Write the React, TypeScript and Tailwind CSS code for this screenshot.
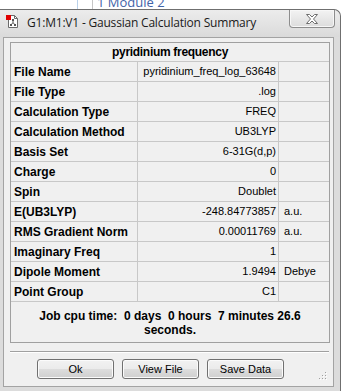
import React from "react";

interface SummaryRow {
  label: string;
  value: string;
  unit: string;
}

const rows: SummaryRow[] = [
  { label: "File Name", value: "pyridinium_freq_log_63648", unit: "" },
  { label: "File Type", value: ".log", unit: "" },
  { label: "Calculation Type", value: "FREQ", unit: "" },
  { label: "Calculation Method", value: "UB3LYP", unit: "" },
  { label: "Basis Set", value: "6-31G(d,p)", unit: "" },
  { label: "Charge", value: "0", unit: "" },
  { label: "Spin", value: "Doublet", unit: "" },
  { label: "E(UB3LYP)", value: "-248.84773857", unit: "a.u." },
  { label: "RMS Gradient Norm", value: "0.00011769", unit: "a.u." },
  { label: "Imaginary Freq", value: "1", unit: "" },
  { label: "Dipole Moment", value: "1.9494", unit: "Debye" },
  { label: "Point Group", value: "C1", unit: "" },
];

function AppIcon() {
  return (
    <svg width="12" height="13" viewBox="0 0 12 13" className="shrink-0">
      <path d="M2.5 0.5H8.5L11.5 3.5V12.5H2.5Z" fill="#fff" stroke="#6b6b6b" />
      <path d="M8.5 0.5V3.5H11.5" fill="none" stroke="#6b6b6b" />
      {/* tiny molecule */}
      <path d="M7 5V7.5M7 7.5L5 10M7 7.5L9 10" stroke="#555" strokeWidth="1" />
      <rect x="6" y="4" width="2" height="2" fill="#555" />
      <rect x="4" y="9" width="2" height="2" fill="#555" />
      <rect x="8" y="9" width="2" height="2" fill="#555" />
      <rect x="0" y="0" width="5" height="5" fill="#e00000" />
    </svg>
  );
}

function CloseGlyph() {
  return (
    <svg width="14" height="10" viewBox="0 0 14 10">
      <path
        d="M1.5 0.5H4.5L7 3L9.5 0.5H12.5L8.5 5L12.5 9.5H9.5L7 7L4.5 9.5H1.5L5.5 5Z"
        fill="#fff"
        stroke="#6e6e6e"
        strokeWidth="1"
        strokeLinejoin="round"
      />
    </svg>
  );
}

function Grip() {
  return (
    <svg width="10" height="10" viewBox="0 0 10 10">
      {[
        [7, 1],
        [4, 4],
        [7, 4],
        [1, 7],
        [4, 7],
        [7, 7],
      ].map(([x, y]) => (
        <g key={`${x}-${y}`}>
          <rect x={x + 1} y={y + 1} width="1" height="1" fill="#fff" />
          <rect x={x} y={y} width="1" height="1" fill="#a0a0a0" />
        </g>
      ))}
    </svg>
  );
}

function WinButton({ label }: { label: string }) {
  return (
    <button
      className="w-[77px] h-[20px] rounded-[3px] border border-[#707070] text-[11px] leading-none text-black
        bg-[linear-gradient(to_bottom,#f2f2f2_0%,#ebebeb_50%,#dddddd_51%,#cfcfcf_100%)]
        shadow-[inset_0_0_0_1px_#fbfbfb]"
    >
      {label}
    </button>
  );
}

export default function App() {
  return (
    <div className="w-[341px] h-[391px] bg-white overflow-hidden font-['Liberation_Sans',Arial,sans-serif]">
      {/* strip of the main window behind the dialog */}
      <div className="h-[9px] flex overflow-hidden">
        <div className="w-[77px]" />
        <div className="w-[1px] bg-[#b9d1ea]" />
        <div className="w-[14px]" />
        <div className="w-[1px] bg-[#c6c6c6]" />
        <div className="pl-[4px] -mt-[4px] text-[13px] leading-none text-[#3f63a8] font-['Open_Sans',sans-serif]">
          1 Module 2
        </div>
      </div>

      {/* dialog window */}
      <div className="h-[382px] flex flex-col border-t border-r border-[#6f6f6f] rounded-tr-[7px] bg-[#dcdcdc]">
        <div className="h-[27px] flex items-start bg-[linear-gradient(to_bottom,#ececec,#dadada)] rounded-tr-[7px]">
          <div className="pl-[6px] pt-[5px]">
            <AppIcon />
          </div>
          <div className="pl-[9px] pt-[5px] text-[12px] leading-[16px] text-[#1a1a1a] font-['Open_Sans','Noto_Sans',sans-serif] tracking-[-0.2px]">
            G1:M1:V1 - Gaussian Calculation Summary
          </div>
          <div
            className="ml-auto mr-[5px] w-[46px] h-[18px] flex items-center justify-center border border-t-0 border-[#8d8d8d] rounded-b-[4px]
              bg-[linear-gradient(to_bottom,#f3f3f3,#dcdcdc)] shadow-[inset_0_0_0_1px_#f7f7f7]"
          >
            <CloseGlyph />
          </div>
        </div>

        <div className="relative h-[350px] ml-[3px] mr-[6px] border border-[#a3a3a3] bg-[#f0f0f0] flex flex-col">
          {/* summary table */}
          <div className="ml-[6px] mt-[4px] w-[320px] h-[301px] border border-[#a0a0a0] flex flex-col">
            <div className="h-[19px] border-b border-[#c8c8c8] flex items-center justify-center text-[12px] font-bold text-black tracking-[-0.3px]">
              pyridinium frequency
            </div>
            {rows.map((row) => (
              <div key={row.label} className="h-[20px] border-b border-[#c8c8c8] flex text-black">
                <div className="w-[127px] border-r border-[#c8c8c8] pl-[3px] flex items-center text-[12px] font-bold">
                  {row.label}
                </div>
                <div className="w-[141px] border-r border-[#c8c8c8] pr-[2px] flex items-center justify-end text-[11px]">
                  {row.value}
                </div>
                <div className="flex-1 pl-[5px] flex items-center text-[11px]">{row.unit}</div>
              </div>
            ))}
            <div className="flex-1 pt-[7px] text-center text-[12px] leading-[14px] font-bold text-black whitespace-pre">
              {"Job cpu time:  0 days  0 hours  7 minutes 26.6\nseconds."}
            </div>
          </div>

          <div className="ml-[6px] mt-[8px] w-[319px] h-[2px] border-t border-[#a0a0a0] border-b border-b-white" />

          <div className="mt-[6px] pl-[33px] flex gap-[8px]">
            <WinButton label="Ok" />
            <WinButton label="View File" />
            <WinButton label="Save Data" />
          </div>

          <div className="absolute right-[5px] bottom-[5px]">
            <Grip />
          </div>
        </div>
      </div>
    </div>
  );
}
